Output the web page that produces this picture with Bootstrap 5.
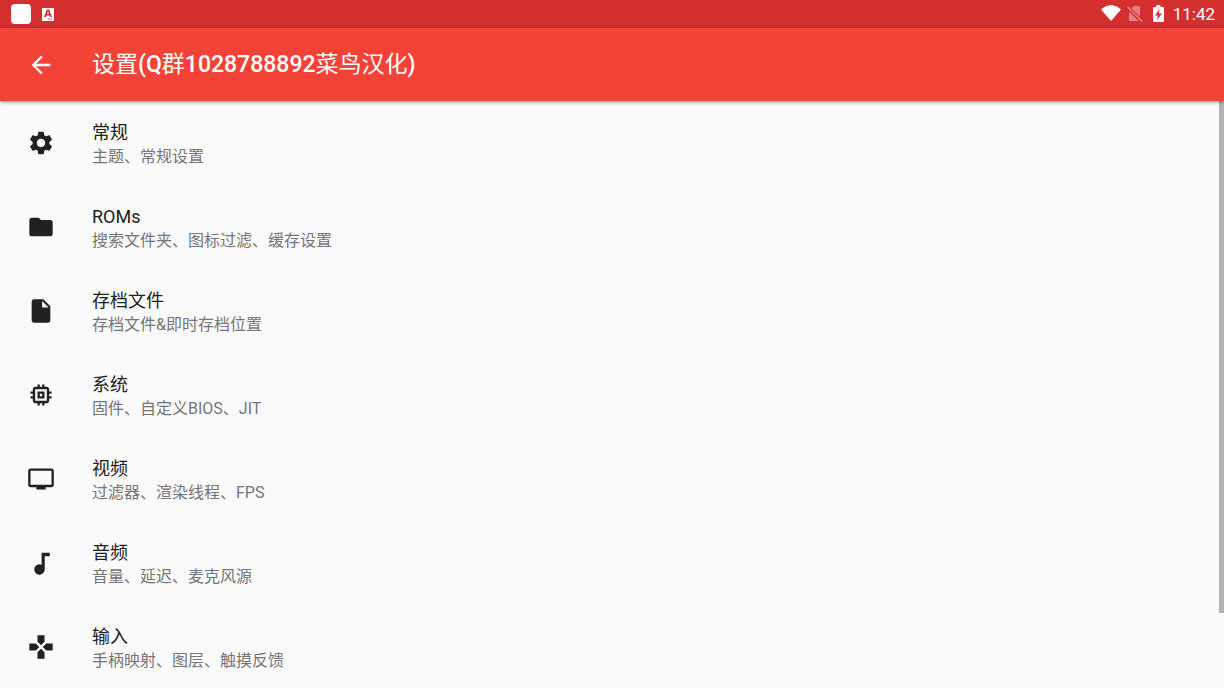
<!DOCTYPE html>
<html lang="zh-CN">
<head>
<meta charset="utf-8">
<meta name="viewport" content="width=device-width, initial-scale=1">
<title>设置</title>
<link href="https://cdn.jsdelivr.net/npm/bootstrap@5.3.0/dist/css/bootstrap.min.css" rel="stylesheet">
<style>
  body { font-family: Roboto, "Noto Sans CJK SC", sans-serif; background: #fafafa; color: #212121; }
  .status-bar { height: 28px; background: #d32f2f; padding: 0 9px 0 11px; font-size: 17px; line-height: 28px; }
  .app-square { width: 20px; height: 20px; border-radius: 4px; background: #fff; }
  .app-bar { height: 73px; background: #f44336; padding: 0 27px; box-shadow: 0 1px 4px rgba(0, 0, 0, .45); z-index: 2; }
  .app-bar h1 { font-size: 23px; line-height: 32px; font-weight: 400; }
  .app-bar .latin { font-weight: 500; }
  .lead-gap { gap: 37px; }
  .setting { height: 84px; padding: 0 27px; color: #212121; }
  .setting-title { font-size: 18px; line-height: 24px; }
  .setting-note { font-size: 16px; line-height: 24px; color: #757575; }
  .scroll-thumb { width: 5px; height: 87.2%; background: #b3b3b3; }
  svg { display: block; fill: currentColor; flex: none; }
</style>
</head>
<body class="vh-100 d-flex flex-column overflow-hidden">
<div class="status-bar d-flex align-items-center justify-content-between text-white flex-shrink-0">
  <div class="d-flex align-items-center gap-2">
    <span class="app-square"></span>
    <svg width="18" height="18" viewBox="0 0 18 18"><path fill-rule="evenodd" d="M3 3h12v13H3zM5 12h2l.5-1.500h3L11 12h2L10.100 4.500H7.900zM8.100 9 9 6.500 9.900 9zM9 13.500v1h1.500v-1zM11.500 13.500v1H13v-1z"/></svg>
  </div>
  <div class="d-flex align-items-center">
    <svg class="me-1" width="20" height="20" viewBox="0 0 20 20"><path d="M0 5.500C6-.2 14-.2 20 5.500L10 17z"/></svg>
    <svg class="me-1" width="20" height="20" viewBox="0 0 20 20" opacity=".4"><path d="M8.500 2H14a1 1 0 0 1 1 1v9.500L6.400 4.200zM2 3.300 3.100 2.200 17.800 16.900 16.700 18zM4 7.400 13.600 17H5a1 1 0 0 1-1-1z"/></svg>
    <svg class="me-1" width="20" height="20" viewBox="0 0 20 20"><path fill-rule="evenodd" d="M7.500 1h4v2H14a1 1 0 0 1 1 1v13a1 1 0 0 1-1 1H5a1 1 0 0 1-1-1V4a1 1 0 0 1 1-1h2.500zM10.500 5 6 11.500h2.800L8 16l5-6.500h-3z"/></svg>
    <time>11:42</time>
  </div>
</div>

<header class="app-bar d-flex align-items-center lead-gap text-white position-relative flex-shrink-0">
  <button type="button" class="btn p-0 border-0 text-white" aria-label="返回">
    <svg width="28" height="28" viewBox="0 0 24 24"><path d="M20 11H7.830l5.590-5.590L12 4l-8 8 8 8 1.410-1.410L7.830 13H20v-2z"/></svg>
  </button>
  <h1 class="m-0">设置<span class="latin">(Q</span>群<span class="latin">1028788892</span>菜鸟汉化<span class="latin">)</span></h1>
</header>

<main class="flex-fill overflow-hidden position-relative">
  <nav aria-label="设置">
    <a href="#general" class="setting d-flex align-items-center lead-gap text-decoration-none">
      <svg width="28" height="28" viewBox="0 0 24 24"><path d="M19.140 12.940c.04-.3.06-.61.06-.94 0-.32-.02-.64-.07-.94l2.030-1.580c.18-.14.23-.41.12-.61l-1.920-3.320c-.12-.22-.37-.29-.59-.22l-2.390.96c-.5-.38-1.030-.7-1.620-.94l-.36-2.540c-.04-.24-.24-.41-.48-.41h-3.840c-.24 0-.43.17-.47.41l-.36 2.540c-.59.24-1.130.57-1.620.94l-2.390-.96c-.22-.08-.47 0-.59.22L2.740 8.870c-.12.21-.08.47.12.61l2.030 1.580c-.05.3-.09.63-.09.94s.02.64.07.94l-2.030 1.580c-.18.14-.23.41-.12.61l1.920 3.320c.12.22.37.29.59.22l2.390-.96c.5.38 1.030.7 1.620.94l.36 2.540c.05.24.24.41.48.41h3.840c.24 0 .44-.17.47-.41l.36-2.540c.59-.24 1.130-.56 1.620-.94l2.390.96c.22.08.47 0 .59-.22l1.920-3.320c.12-.22.07-.47-.12-.61l-2.010-1.580zM12 15.600c-1.980 0-3.600-1.620-3.600-3.600s1.620-3.600 3.600-3.600 3.600 1.620 3.600 3.600-1.620 3.600-3.600 3.600z"/></svg>
      <span class="pt-1"><span class="setting-title d-block">常规</span><span class="setting-note d-block">主题、常规设置</span></span>
    </a>
    <a href="#roms" class="setting d-flex align-items-center lead-gap text-decoration-none">
      <svg width="28" height="28" viewBox="0 0 24 24"><path d="M10 4H4c-1.100 0-1.990.9-1.990 2L2 18c0 1.100.9 2 2 2h16c1.100 0 2-.9 2-2V8c0-1.100-.9-2-2-2h-8l-2-2z"/></svg>
      <span class="pt-1"><span class="setting-title d-block">ROMs</span><span class="setting-note d-block">搜索文件夹、图标过滤、缓存设置</span></span>
    </a>
    <a href="#saves" class="setting d-flex align-items-center lead-gap text-decoration-none">
      <svg width="28" height="28" viewBox="0 0 24 24"><path d="M6 2c-1.100 0-1.990.9-1.990 2L4 20c0 1.100.89 2 1.990 2H18c1.100 0 2-.9 2-2V8l-6-6H6zm7 7V3.500L18.500 9H13z"/></svg>
      <span class="pt-1"><span class="setting-title d-block">存档文件</span><span class="setting-note d-block">存档文件&amp;即时存档位置</span></span>
    </a>
    <a href="#system" class="setting d-flex align-items-center lead-gap text-decoration-none">
      <svg width="28" height="28" viewBox="0 0 24 24"><path d="M15 9H9v6h6V9zm-2 4h-2v-2h2v2zm8-2V9h-2V7c0-1.100-.9-2-2-2h-2V3h-2v2h-2V3H9v2H7c-1.100 0-2 .9-2 2v2H3v2h2v2H3v2h2v2c0 1.100.9 2 2 2h2v2h2v-2h2v2h2v-2h2c1.100 0 2-.9 2-2v-2h2v-2h-2v-2h2zm-4 6H7V7h10v10z"/></svg>
      <span class="pt-1"><span class="setting-title d-block">系统</span><span class="setting-note d-block">固件、自定义BIOS、JIT</span></span>
    </a>
    <a href="#video" class="setting d-flex align-items-center lead-gap text-decoration-none">
      <svg width="28" height="28" viewBox="0 0 24 24"><path d="M21 3H3c-1.100 0-2 .9-2 2v12c0 1.100.9 2 2 2h5v2h8v-2h5c1.100 0 1.990-.9 1.990-2L23 5c0-1.100-.9-2-2-2zm0 14H3V5h18v12z"/></svg>
      <span class="pt-1"><span class="setting-title d-block">视频</span><span class="setting-note d-block">过滤器、渲染线程、FPS</span></span>
    </a>
    <a href="#audio" class="setting d-flex align-items-center lead-gap text-decoration-none">
      <svg width="28" height="28" viewBox="0 0 24 24"><path d="M12.500 3.300v10.100A4.500 4.500 0 1 0 15.200 17.300V6.300h4.300v-3z"/></svg>
      <span class="pt-1"><span class="setting-title d-block">音频</span><span class="setting-note d-block">音量、延迟、麦克风源</span></span>
    </a>
    <a href="#input" class="setting d-flex align-items-center lead-gap text-decoration-none">
      <svg width="28" height="28" viewBox="0 0 24 24"><path d="M15 7.500V2H9v5.500l3 3 3-3zM7.500 9H2v6h5.500l3-3-3-3zM9 16.500V22h6v-5.500l-3-3-3 3zM16.500 9l-3 3 3 3H22V9h-5.500z"/></svg>
      <span class="pt-1"><span class="setting-title d-block">输入</span><span class="setting-note d-block">手柄映射、图层、触摸反馈</span></span>
    </a>
  </nav>
  <div class="scroll-thumb position-absolute top-0 end-0"></div>
</main>
<script src="https://cdn.jsdelivr.net/npm/bootstrap@5.3.0/dist/js/bootstrap.bundle.min.js"></script>
</body>
</html>
